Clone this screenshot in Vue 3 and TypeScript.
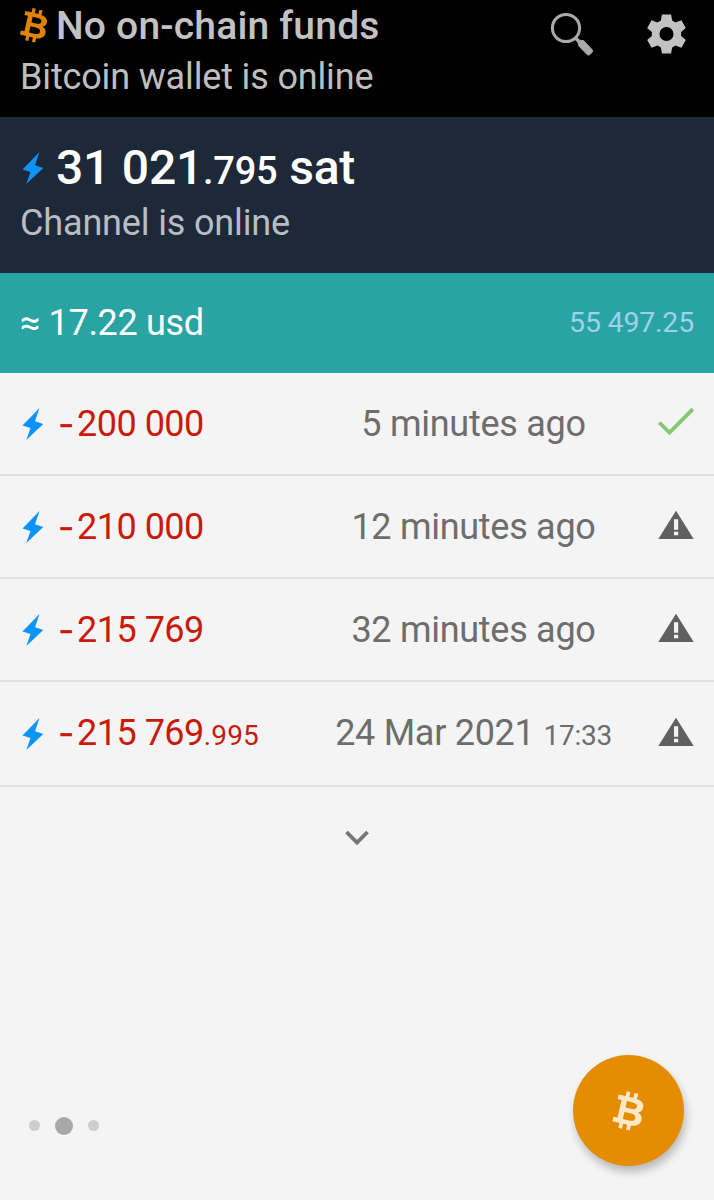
<script setup lang="ts">
interface Payment {
  whole: string
  fraction?: string
  date: string
  time?: string
  settled: boolean
}

const payments: Payment[] = [
  { whole: '200 000', date: '5 minutes ago', settled: true },
  { whole: '210 000', date: '12 minutes ago', settled: false },
  { whole: '215 769', date: '32 minutes ago', settled: false },
  { whole: '215 769', fraction: '.995', date: '24 Mar 2021', time: '17:33', settled: false },
]
const pages = [0, 1, 2]
const activePage = 1
const bolt = 'M17.500 0 L0.500 17.500 L8.500 20 L4.300 32 L21.300 16 L13 13.200 Z'
const bitcoin =
  'M7 0h3.400v4.500h3.800V0h3.400v4.800c4.600.7 7.200 2.800 7.200 6.400 0 2.600-1.300 4.300-3.600 5.200 3 .9 4.600 3 4.600 5.900 0 4.300-3 6.700-8.200 7.100V34h-3.400v-4.500h-3.800V34H7v-4.500H0.500v-4.300h3.700V8.800H0.500V4.500h6.500z M9.200 8.700v6h5c3.200 0 4.900-1 4.900-3.100s-1.800-2.900-4.800-2.900z M9.200 18.800v6.500h5.600c3.400 0 5.200-1.100 5.200-3.300s-2-3.200-5.300-3.200z'
</script>

<template>
  <main class="wallet">
    <header class="chain">
      <div class="chain-text">
        <div class="chain-title">
          <svg class="coin" viewBox="-4 -2 34 38"><path :d="bitcoin" fill="#dd8500" fill-rule="evenodd" transform="rotate(13 13 17)" /></svg>
          <span class="title">No on-chain funds</span>
        </div>
        <div class="status chain-status">Bitcoin wallet is online</div>
      </div>
      <svg class="search" viewBox="0 0 44 44">
        <circle cx="16" cy="16" r="13.600" fill="none" stroke="#a9a9a9" stroke-width="3" />
        <path d="M25.500 26 L29 29.500" stroke="#a9a9a9" stroke-width="3.500" />
        <path d="M28 29.500 Q27.400 28.200 30.500 28.400 L33.500 28.600 L42 37.600 Q43.200 39 42 40.500 L39.500 42.700 Q38.200 43.600 37 42.500 L28.500 33.500 Z" fill="#a9a9a9" stroke="#a9a9a9" stroke-width="1" />
      </svg>
      <svg class="gear" viewBox="0 0 40 40">
        <path fill="#c2c2c2" fill-rule="evenodd" d="M15.300 0h9.400l1.100 6.200 3.400 2 6.100-2.300 4.500 7.900-4.800 4.200v4l4.800 4.200-4.500 7.900-6.100-2.300-3.400 2-1.100 6.200h-9.400l-1.100-6.200-3.400-2-6.100 2.300-4.500-7.900 4.800-4.200v-4l-4.800-4.200 4.500-7.900 6.100 2.300 3.400-2z M20 12.800a7.200 7.200 0 1 0 0 14.400a7.200 7.200 0 1 0 0-14.400z" />
      </svg>
    </header>

    <section class="channel">
      <div class="balance">
        <svg class="bolt" viewBox="0 0 22 32"><path :d="bolt" fill="#0a94fb" /></svg>
        <span class="amount">31 021<small>.795</small> sat</span>
      </div>
      <div class="status">Channel is online</div>
    </section>

    <section class="fiat">
      <span class="fiat-value">≈ 17.22 usd</span>
      <span class="rate">55 497.25</span>
    </section>

    <ul class="payments">
      <li v-for="(p, i) in payments" :key="i" class="payment">
        <svg class="bolt" viewBox="0 0 22 32"><path :d="bolt" fill="#0a94fb" /></svg>
        <span class="sum"><span class="minus">-</span>{{ p.whole }}<small v-if="p.fraction">{{ p.fraction }}</small></span>
        <span class="date">{{ p.date }}<small v-if="p.time" class="time">{{ p.time }}</small></span>
        <svg v-if="p.settled" class="mark" viewBox="0 0 36 30"><path d="M1.200 15.500 L11.500 25.500 L34.800 2.200" fill="none" stroke="#87c771" stroke-width="3.800" /></svg>
        <svg v-else class="mark" viewBox="0 0 36 30">
          <path d="M18 .8 L35.700 29 H.3 Z" fill="#606060" />
          <path d="M16 9.200 h4.200 v10.600 h-4.200 z M16 21.700 h4.200 v3.600 h-4.200 z" fill="#f4f4f4" />
        </svg>
      </li>
    </ul>

    <svg class="more" viewBox="0 0 24 16"><path d="M1.500 2 L12 12.500 L22.500 2" fill="none" stroke="#757575" stroke-width="3.800" /></svg>

    <footer class="bottom">
      <div class="dots">
        <i v-for="n in pages" :key="n" class="dot" :class="{ active: n === activePage }"></i>
      </div>
      <button class="fab" aria-label="Bitcoin">
        <svg class="fab-coin" viewBox="-4 -2 34 38"><path :d="bitcoin" fill="#ffe8c6" fill-rule="evenodd" transform="rotate(13 13 17)" /></svg>
      </button>
    </footer>
  </main>
</template>

<style>
body { background: #f4f4f4; }
</style>

<style scoped>
.wallet {
  box-sizing: border-box;
  width: 714px;
  height: 1200px;
  display: flex;
  flex-direction: column;
  overflow: hidden;
  background: #f4f4f4;
  font-family: Roboto, "Liberation Sans", sans-serif;
  font-size: 36px;
  letter-spacing: -0.15px;
  white-space: pre;
}
svg { display: block; flex: none; }
.chain {
  box-sizing: border-box;
  height: 117px;
  flex: none;
  display: flex;
  align-items: flex-start;
  padding: 0 28px 0 20px;
  background: #000;
}
.chain-text { flex: 1; }
.chain-title { display: flex; height: 52px; }
.coin { width: 33px; height: 37px; margin: 7px 5px 0 -2px; }
.title { font-size: 39px; font-weight: 500; line-height: 53px; letter-spacing: 0.2px; color: #c2c2c2; }
.status { line-height: 51px; letter-spacing: -0.15px; color: #b9bcc0; }
.chain-status { color: #bebebe; }
.search { width: 44px; height: 44px; margin: 12px 53px 0 0; }
.gear { width: 39px; height: 40px; margin-top: 14px; }
.channel {
  box-sizing: border-box;
  height: 156px;
  flex: none;
  padding: 20px 20px 0;
  background: #1d2938;
}
.balance { display: flex; align-items: center; height: 61px; }
.bolt { width: 22px; height: 32px; margin-left: 2px; }
.amount { margin-left: 12px; font-size: 48px; font-weight: 500; letter-spacing: -0.22px; color: #fff; }
.amount small { font-size: 38px; }
.fiat {
  height: 100px;
  flex: none;
  display: flex;
  align-items: center;
  justify-content: space-between;
  padding: 0 20px;
  background: #2aa4a2;
  color: #fff;
}
.fiat-value { letter-spacing: -0.32px; }
.rate { margin-top: -1px; font-size: 28.500px; letter-spacing: -0.2px; color: #9fd0ef; }
.payments { margin: 0; padding: 0; list-style: none; }
.payment {
  height: 101px;
  display: grid;
  grid-template-columns: 40px 229px 369px 36px;
  align-items: center;
  padding: 0 20px;
  border-bottom: 2px solid #e0e0e0;
  line-height: 101px;
}
.payment:last-child { padding-bottom: 2px; }
.sum { padding-top: 1px; letter-spacing: -0.5px; color: #c91a0b; }
.sum small, .time { font-size: 28px; }
.sum small { letter-spacing: 0.1px; }
.minus {
  display: inline-block;
  width: 17px;
  line-height: 1;
  transform: translateY(1px) scaleX(1.250);
  transform-origin: left;
  -webkit-text-stroke: 0.6px #c91a0b;
}
.date { padding-top: 1px; text-align: center; letter-spacing: -0.28px; color: #6d6d6d; }
.time { margin-left: 9px; }
.mark { width: 36px; height: 30px; margin-top: -4px; }
.more { width: 24px; height: 16px; margin: 43px auto 0; }
.bottom {
  margin-top: auto;
  display: flex;
  align-items: center;
  justify-content: space-between;
  padding: 0 30px 34px 29px;
}
.dots { display: flex; align-items: center; gap: 15px; margin-top: 30px; }
.dot { width: 11px; height: 11px; border-radius: 50%; background: #cecece; }
.dot.active { width: 18px; height: 18px; background: #a8a8a8; }
.fab {
  width: 111px;
  height: 111px;
  padding: 0;
  border: 0;
  border-radius: 50%;
  display: flex;
  align-items: center;
  justify-content: center;
  background: #e58c00;
  box-shadow: 2px 6px 9px rgba(0, 0, 0, 0.24);
}
.fab-coin { width: 38px; height: 42px; }
</style>
